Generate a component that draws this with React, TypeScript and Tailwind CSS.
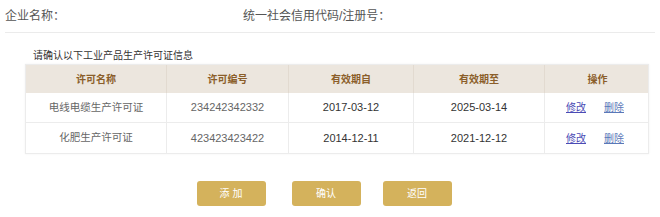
import React from "react";

const rows = [
  { name: "电线电缆生产许可证", no: "234242342332", from: "2017-03-12", to: "2025-03-14" },
  { name: "化肥生产许可证", no: "423423423422", from: "2014-12-11", to: "2021-12-12" },
];

const cols = "grid grid-cols-[141px_122px_125px_131px_105px]";

export default function App() {
  return (
    <div
      className="w-[660px] h-[217px] bg-white overflow-hidden"
      style={{ fontFamily: '"Liberation Sans", "Noto Sans CJK SC", sans-serif' }}
    >
      <div className="mx-[5px] h-[33px] border-b border-[#ebebeb] flex items-center text-[12px] text-[#555]">
        <div className="w-[238px]">企业名称：</div>
        <div>统一社会信用代码/注册号：</div>
      </div>
      <div className="pl-[33px] pt-[17px] h-[31px] text-[10px] leading-[12px] text-[#333]">
        请确认以下工业产品生产许可证信息
      </div>
      <div className="ml-[25px] w-[624px] border border-[#ececec] shadow-[0_0_2px_rgba(0,0,0,0.06)]">
        <div className={`${cols} h-[28px] bg-[#ece6de] text-[10px] font-bold text-[#8b5e2a]`}>
          {["许可名称", "许可编号", "有效期自", "有效期至", "操作"].map((h, i) => (
            <div
              key={h}
              className={`flex items-center justify-center ${i < 4 ? "border-r border-[#e2dad0]" : ""}`}
            >
              {h}
            </div>
          ))}
        </div>
        {rows.map((r, ri) => (
          <div
            key={r.no}
            className={`${cols} h-[30px] text-[10.5px] text-[#666] ${ri === 0 ? "border-b border-[#ececec]" : ""}`}
          >
            <div className="flex items-center justify-center border-r border-[#ececec]">{r.name}</div>
            <div className="flex items-center justify-center border-r border-[#ececec] text-[11px] text-[#666]">{r.no}</div>
            <div className="flex items-center justify-center border-r border-[#ececec] text-[11px] text-[#333]">{r.from}</div>
            <div className="flex items-center justify-center border-r border-[#ececec] text-[11px] text-[#333]">{r.to}</div>
            <div className="flex items-center justify-center gap-[18px] pr-[5px] text-[10px] text-[#4b4bb5]">
              <span className="underline">修改</span>
              <span className="underline text-[#5a78b8]">删除</span>
            </div>
          </div>
        ))}
      </div>
      <div className="flex justify-center pt-[27px]">
        <div className="flex ml-[-12px]">
          <div className="w-[69px] h-[25px] rounded-[3px] bg-[#d4b25c] text-white text-[10px] flex items-center justify-center">添 加</div>
          <div className="ml-[26px] w-[69px] h-[25px] rounded-[3px] bg-[#d4b25c] text-white text-[10px] flex items-center justify-center">确认</div>
          <div className="ml-[22px] w-[69px] h-[25px] rounded-[3px] bg-[#d4b25c] text-white text-[10px] flex items-center justify-center">返回</div>
        </div>
      </div>
    </div>
  );
}
